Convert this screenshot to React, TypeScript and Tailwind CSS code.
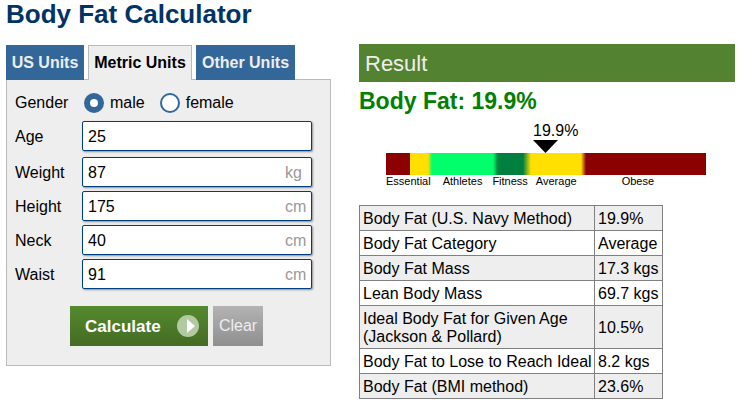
const arial = 'font-["Liberation_Sans",Arial,sans-serif]';

const fields = [
  { label: 'Age', value: '25', unit: '' },
  { label: 'Weight', value: '87', unit: 'kg' },
  { label: 'Height', value: '175', unit: 'cm' },
  { label: 'Neck', value: '40', unit: 'cm' },
  { label: 'Waist', value: '91', unit: 'cm' },
];

const results = [
  ['Body Fat (U.S. Navy Method)', '19.9%'],
  ['Body Fat Category', 'Average'],
  ['Body Fat Mass', '17.3 kgs'],
  ['Lean Body Mass', '69.7 kgs'],
  ['Ideal Body Fat for Given Age (Jackson & Pollard)', '10.5%'],
  ['Body Fat to Lose to Reach Ideal', '8.2 kgs'],
  ['Body Fat (BMI method)', '23.6%'],
];

function Radio({ label, checked }: { label: string; checked?: boolean }) {
  return (
    <div className="flex items-center gap-[6px]">
      {checked ? (
        <span className="h-5 w-5 rounded-full border-[6px] border-[#336699] bg-white" />
      ) : (
        <span className="h-5 w-5 rounded-full border-2 border-[#336699] bg-white" />
      )}
      <span>{label}</span>
    </div>
  );
}

export default function App() {
  return (
    <div className={`${arial} h-[404px] w-[752px] overflow-hidden bg-white text-[16px] text-black`}>
      <h1 className="h-[45px] pl-[6px] text-[26px] leading-[29px] font-bold text-[#003366]">Body Fat Calculator</h1>
      <div className="flex">
        <div className="ml-[6px] w-[325px]">
          <div className="relative z-10 flex gap-1">
            <div className="flex h-[35px] w-[78px] items-center justify-center bg-[#336699] text-[16px] font-bold text-[#eeeeee]">US Units</div>
            <div className="flex h-[35px] w-[104px] items-center justify-center border border-b-0 border-[#bbbbbb] bg-[#eeeeee] text-[16px] font-bold text-black">Metric Units</div>
            <div className="flex h-[35px] w-[99px] items-center justify-center bg-[#336699] text-[16px] font-bold text-[#eeeeee]">Other Units</div>
          </div>
          <div className="-mt-px h-[287px] border border-[#bbbbbb] bg-[#eeeeee] pl-[8px] pt-[13px]">
            <div className="flex h-5 items-center">
              <span className="w-[69px]">Gender</span>
              <div className="flex gap-[15px]">
                <Radio label="male" checked />
                <Radio label="female" />
              </div>
            </div>
            <div className="mt-[8px] flex flex-col gap-1">
              {fields.map((f, i) => (
                <div key={f.label} className={`flex items-center ${i === 1 ? 'mt-[2px]' : ''}`}>
                  <span className="w-[67px] pt-px">{f.label}</span>
                  <div className="flex h-[30px] w-[230px] items-center justify-between rounded-[2px] border border-[#003f7f] bg-white pl-[5px] pr-[5px] pt-px shadow-[1px_1px_2px_rgba(0,0,0,0.4)]">
                    <span>{f.value}</span>
                    <span className="w-[21px] text-[#999999]">{f.unit}</span>
                  </div>
                </div>
              ))}
            </div>
            <div className="mt-[17px] ml-[55px] flex gap-[5px]">
              <div className="flex h-10 w-[138px] items-center bg-[linear-gradient(#558a2d,#446b24)] pl-[15px] text-[17px] font-bold text-white">
                <span className="pt-px">Calculate</span>
                <svg viewBox="0 0 22 22" className="ml-4 h-[22px] w-[22px]">
                  <circle cx="11" cy="11" r="11" fill="#b3c9a3" />
                  <path d="M10 4 L18 11 L10 18 Z" fill="#ffffff" />
                </svg>
              </div>
              <div className="flex h-10 w-[50px] items-center justify-center bg-[linear-gradient(#b3b3b3,#8f8f8f)] text-[#eeeeee]">Clear</div>
            </div>
          </div>
        </div>

        <div className="ml-[28px] -mt-px w-[376px]">
          <div className="flex h-[38px] items-center bg-[#538330] pl-[6px] text-[22px] text-[#eeeeee]">Result</div>
          <div className="mt-[7px] text-[23px] leading-[25px] font-bold text-[#008000]">Body Fat: 19.9%</div>
          <div className="relative ml-[27px] mt-[39px] w-[320px]">
            <div className="absolute left-[147px] -top-[31px] text-[16px] leading-[18px]">19.9%</div>
            <svg viewBox="0 0 25 13" className="absolute left-[147px] -top-[13px] h-[13px] w-[25px]">
              <path d="M0 0 H25 L12.5 13 Z" fill="#000000" />
            </svg>
            <div className="h-[22px] bg-[linear-gradient(to_right,#8b0000_24px,#ffe000_24px,#ffe000_42px,#00ff6a_46px,#00ff6a_107px,#008040_112px,#008040_137px,#ffe000_145px,#ffe000_195px,#8b0000_200px)]" />
            <div className="flex text-[11px] leading-[13px]">
              <span>Essential</span>
              <span className="ml-[12px]">Athletes</span>
              <span className="ml-[10px]">Fitness</span>
              <span className="ml-[8px]">Average</span>
              <span className="ml-[45px]">Obese</span>
            </div>
          </div>
          <table className="mt-[17px] w-[304px] table-fixed border-collapse border border-[#808080] text-[16px] leading-[18px]">
            <colgroup>
              <col className="w-[235px]" />
              <col />
            </colgroup>
            <tbody>
              {results.map(([name, value], i) => (
                <tr key={name} className={i % 2 === 0 ? 'bg-[#eeeeee]' : 'bg-white'}>
                  <td className="border border-[#808080] pb-[2px] pl-[3px] pr-0 pt-[4px]">{name}</td>
                  <td className="border border-[#808080] px-[3px] pb-[2px] pt-[4px]">{value}</td>
                </tr>
              ))}
            </tbody>
          </table>
        </div>
      </div>
    </div>
  );
}
